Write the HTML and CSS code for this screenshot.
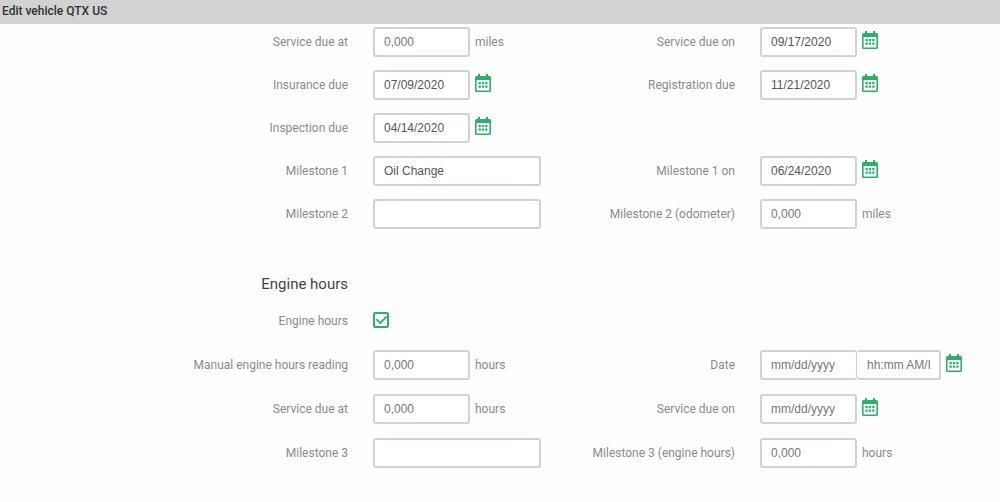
FILE: index.html
```html
<!DOCTYPE html>
<html lang="en">
<head>
<meta charset="utf-8">
<title>Edit vehicle QTX US</title>
<link rel="stylesheet" href="styles.css">
</head>
<body>
<svg class="sprite" aria-hidden="true">
  <symbol id="calendar" viewBox="0 0 16 18">
    <path fill-rule="evenodd" d="M3 0h2v2h6V0h2v2h1.500a1.500 1.500 0 0 1 1.500 1.500v13a1.500 1.500 0 0 1-1.500 1.500h-13a1.500 1.500 0 0 1-1.500-1.500v-13a1.500 1.500 0 0 1 1.500-1.500H3zM1.600 6v10.400h12.800V6z"/>
    <path d="M3.500 8h2.300v2.200H3.500zM6.850 8h2.300v2.200h-2.300zM10.200 8h2.300v2.200h-2.300zM3.500 11.500h2.300v2.200H3.500zM6.850 11.500h2.300v2.200h-2.300zM10.200 11.500h2.300v2.200h-2.300z"/>
  </symbol>
</svg>
<header class="titlebar"><h1>Edit vehicle QTX US</h1></header>
<form class="form">
  <section class="grid">
    <label for="service-at">Service due at</label>
    <div class="field"><input class="box short" id="service-at" type="text" placeholder="0,000"><span class="unit">miles</span></div>
    <label for="service-on">Service due on</label>
    <div class="field"><input class="box short" id="service-on" type="text" value="09/17/2020"><button class="pick" type="button" aria-label="Pick date"><svg><use href="#calendar"/></svg></button></div>

    <label for="insurance">Insurance due</label>
    <div class="field"><input class="box short" id="insurance" type="text" value="07/09/2020"><button class="pick" type="button" aria-label="Pick date"><svg><use href="#calendar"/></svg></button></div>
    <label for="registration">Registration due</label>
    <div class="field"><input class="box short" id="registration" type="text" value="11/21/2020"><button class="pick" type="button" aria-label="Pick date"><svg><use href="#calendar"/></svg></button></div>

    <label for="inspection">Inspection due</label>
    <div class="field last"><input class="box short" id="inspection" type="text" value="04/14/2020"><button class="pick" type="button" aria-label="Pick date"><svg><use href="#calendar"/></svg></button></div>

    <label for="m1">Milestone 1</label>
    <div class="field"><input class="box" id="m1" type="text" value="Oil Change"></div>
    <label for="m1-on">Milestone 1 on</label>
    <div class="field"><input class="box short" id="m1-on" type="text" value="06/24/2020"><button class="pick" type="button" aria-label="Pick date"><svg><use href="#calendar"/></svg></button></div>

    <label for="m2">Milestone 2</label>
    <div class="field"><input class="box" id="m2" type="text"></div>
    <label for="m2-odo">Milestone 2 (odometer)</label>
    <div class="field"><input class="box short" id="m2-odo" type="text" placeholder="0,000"><span class="unit">miles</span></div>
  </section>

  <section class="grid engine">
    <h2 class="start">Engine hours</h2>

    <label class="start" for="engine">Engine hours</label>
    <div class="field last"><input class="tick" id="engine" type="checkbox" checked></div>

    <label for="manual">Manual engine hours reading</label>
    <div class="field"><input class="box short" id="manual" type="text" placeholder="0,000"><span class="unit">hours</span></div>
    <label for="date">Date</label>
    <div class="field"><input class="box short date" id="date" type="text" placeholder="mm/dd/yyyy"><input class="box time" type="text" aria-label="Time" placeholder="hh:mm AM/PM"><button class="pick" type="button" aria-label="Pick date"><svg><use href="#calendar"/></svg></button></div>

    <label for="hours-at">Service due at</label>
    <div class="field"><input class="box short" id="hours-at" type="text" placeholder="0,000"><span class="unit">hours</span></div>
    <label for="hours-on">Service due on</label>
    <div class="field"><input class="box short" id="hours-on" type="text" placeholder="mm/dd/yyyy"><button class="pick" type="button" aria-label="Pick date"><svg><use href="#calendar"/></svg></button></div>

    <label for="m3">Milestone 3</label>
    <div class="field"><input class="box" id="m3" type="text"></div>
    <label for="m3-hours">Milestone 3 (engine hours)</label>
    <div class="field"><input class="box short" id="m3-hours" type="text" placeholder="0,000"><span class="unit">hours</span></div>
  </section>
</form>
</body>
</html>
```
FILE: styles.css
```css
* {
  box-sizing: border-box;
}

body {
  margin: 0;
  background: #fefefe;
  color: #8a8a8a;
  font: 12px/20px Roboto, "Liberation Sans", sans-serif;
}

.sprite {
  display: none;
}

.titlebar {
  padding: 1px 2px 3px;
  background: #d2d2d2;
}

.titlebar h1 {
  margin: 0;
  color: #333;
  font-size: 12px;
  font-weight: 500;
  line-height: 20px;
}

.form {
  padding: 3px 0 20px;
}

.grid {
  display: grid;
  grid-template-columns: 348fr 168fr 169fr 240fr;
  gap: 13px 25px;
  align-items: center;
}

.grid label {
  text-align: right;
}

.field {
  display: flex;
  align-items: center;
  min-width: 0;
  height: 30px;
}

.start {
  grid-column: 1;
}

.last {
  grid-column: 2 / -1;
}

.box {
  width: 100%;
  min-width: 0;
  height: 30px;
  padding: 0 9px;
  border: 2px solid #cdd3da;
  border-radius: 3px;
  background: #fff;
  color: #555;
  font: 12px "Liberation Sans", Arial, sans-serif;
}

.box::placeholder {
  color: #777;
  opacity: 1;
}

.short {
  flex: none;
  width: 97px;
}

.date {
  border-right-width: 1px;
}

.time {
  flex: none;
  width: 84px;
  padding-left: 10px;
  border-left-width: 0;
}

.unit {
  margin-left: 5px;
}

.pick {
  flex: none;
  margin: 0 0 4px 5px;
  padding: 0;
  border: 0;
  background: none;
  color: #28b267;
}

.pick svg {
  display: block;
  width: 16px;
  height: 18px;
  fill: currentColor;
}

.engine {
  margin-top: 47px;
  row-gap: 14px;
}

.engine h2 {
  margin: 0;
  color: #444;
  font-size: 15px;
  font-weight: 400;
  line-height: 16px;
  text-align: right;
}

.tick {
  display: grid;
  place-items: center;
  appearance: none;
  width: 16px;
  height: 16px;
  margin: 0 0 2px;
  border: 2px solid #28b267;
  border-radius: 2px;
  background: #fff;
}

.tick:checked::before {
  content: "";
  width: 9px;
  height: 5px;
  margin-bottom: 3px;
  border: solid #28b267;
  border-width: 0 0 2px 2px;
  transform: rotate(-45deg) scale(0.9);
}
```
